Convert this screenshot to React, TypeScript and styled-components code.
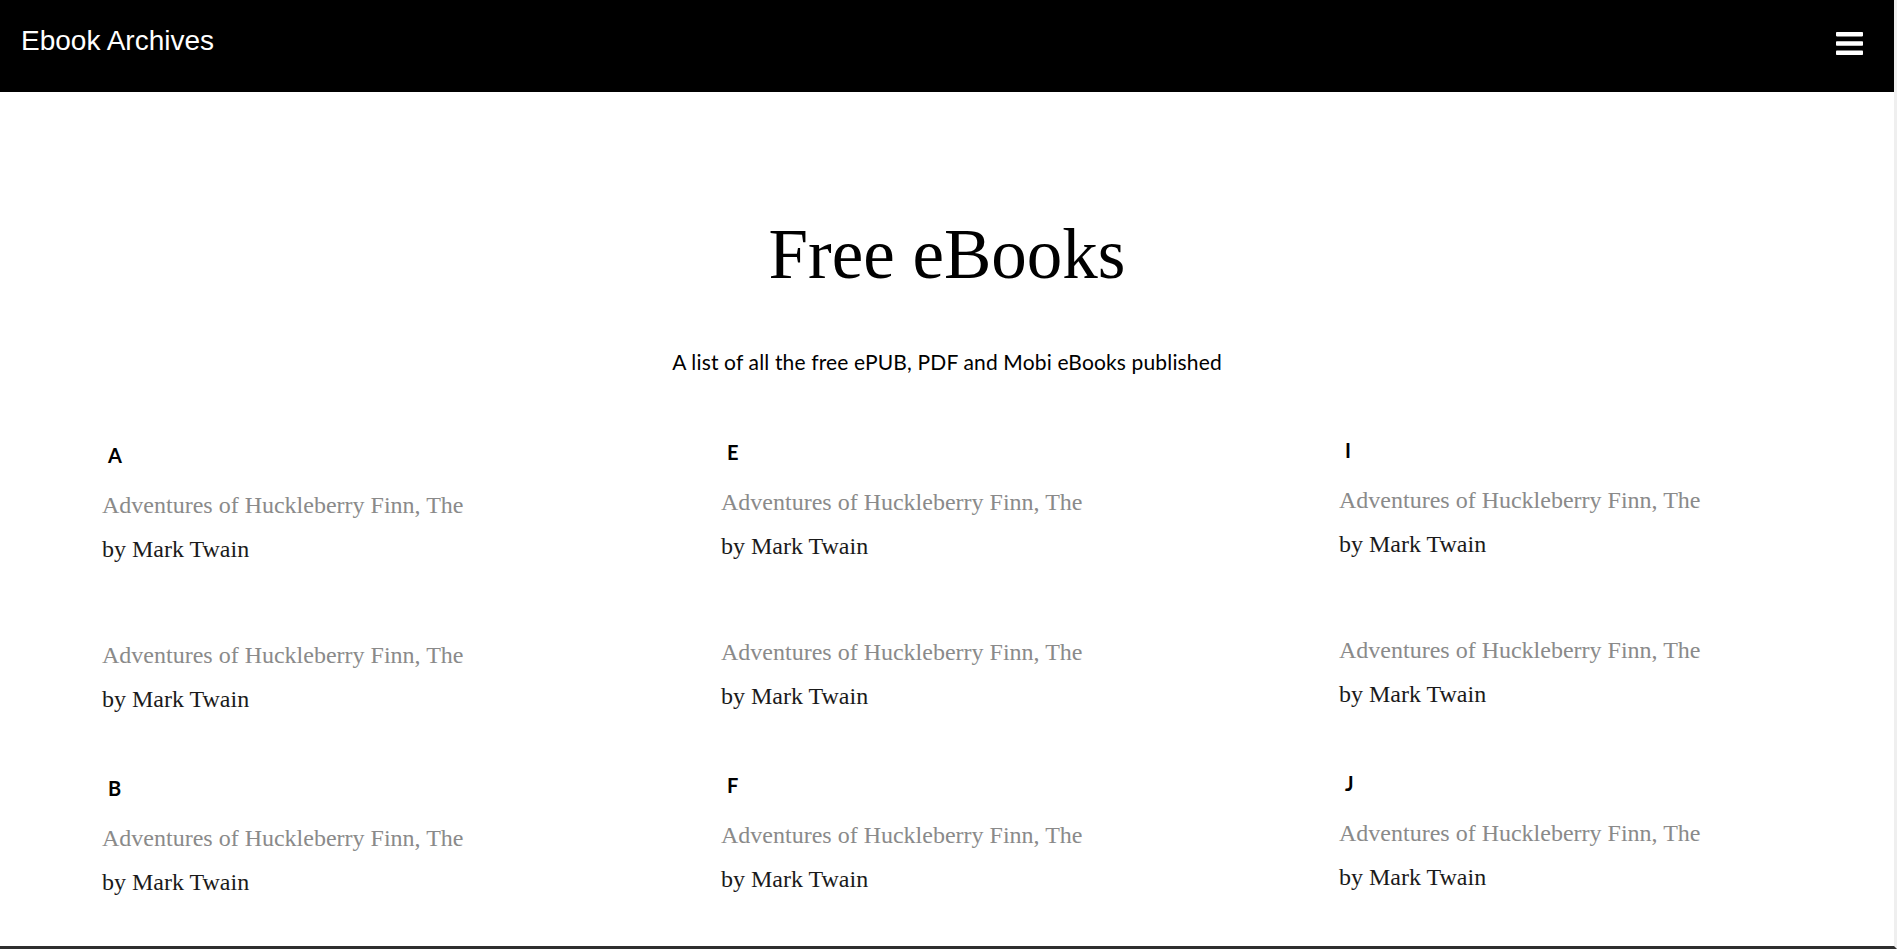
import React from 'react';
import styled, { createGlobalStyle } from 'styled-components';

interface Book {
  title: string;
  author: string;
}

interface LetterGroup {
  letter: string;
  books: Book[];
}

const GlobalStyle = createGlobalStyle`
  * {
    box-sizing: border-box;
  }

  body {
    margin: 0;
    background: #fff;
    color: #000;
  }
`;

const Page = styled.div`
  height: 100vh;
  overflow: hidden;
  border-right: 3px solid #efefef;
  border-bottom: 3px solid #2e2e2e;
`;

const Header = styled.header`
  display: flex;
  justify-content: space-between;
  align-items: flex-start;
  height: 92px;
  padding: 25px 31px 0 21px;
  background: #000;
`;

const Brand = styled.a`
  font-family: 'Liberation Sans', Arial, sans-serif;
  font-size: 28px;
  line-height: 32px;
  color: #fff;
  text-decoration: none;
`;

const MenuButton = styled.button`
  margin-top: 7px;
  padding: 0;
  border: none;
  background: none;
  cursor: pointer;
  display: flex;
`;

const Hero = styled.section`
  display: flex;
  flex-direction: column;
  align-items: center;
  padding-top: 127px;
`;

const Title = styled.h1`
  margin: 0;
  font-family: 'Liberation Serif', 'Times New Roman', serif;
  font-weight: 400;
  font-size: 71px;
  line-height: 70px;
  color: #000;
`;

const Subtitle = styled.p`
  margin: 61px 0 0;
  font-family: Lato, 'Open Sans', sans-serif;
  font-size: 21px;
  letter-spacing: 0.15px;
  line-height: 24px;
  color: #000;
`;

const Columns = styled.div`
  display: grid;
  grid-template-columns: 619px 618px 1fr;
  padding: 69px 0 0 102px;
`;

const Column = styled.div<{ $lift: number }>`
  display: flex;
  flex-direction: column;
  gap: 55px;
  margin-top: ${({ $lift }) => -$lift}px;
`;

const Group = styled.div`
  display: flex;
  flex-direction: column;
`;

const Letter = styled.h4`
  margin: 0 0 16px;
  padding-left: 6px;
  font-family: Lato, 'Open Sans', sans-serif;
  font-weight: 700;
  font-size: 20px;
  line-height: 24px;
  color: #000;
`;

const BookList = styled.ul`
  display: flex;
  flex-direction: column;
  gap: 62px;
  margin: 0;
  padding: 0;
  list-style: none;
`;

const BookItem = styled.li`
  display: flex;
  flex-direction: column;
  font-family: 'Liberation Serif', 'Times New Roman', serif;
  font-size: 24px;
  line-height: 44px;
`;

const BookTitle = styled.a`
  color: #8a8a8a;
  text-decoration: none;
`;

const BookAuthor = styled.span`
  color: #1a1a1a;
`;

const huck: Book = {
  title: 'Adventures of Huckleberry Finn, The',
  author: 'by Mark Twain',
};

const columns: { lift: number; groups: LetterGroup[] }[] = [
  {
    lift: 0,
    groups: [
      { letter: 'A', books: [huck, huck] },
      { letter: 'B', books: [huck] },
    ],
  },
  {
    lift: 3,
    groups: [
      { letter: 'E', books: [huck, huck] },
      { letter: 'F', books: [huck] },
    ],
  },
  {
    lift: 5,
    groups: [
      { letter: 'I', books: [huck, huck] },
      { letter: 'J', books: [huck] },
    ],
  },
];

const BarsIcon = () => (
  <svg width="27" height="23" viewBox="0 0 27 23" fill="#fff">
    <rect x="0" y="0" width="27" height="4.4" rx="0.8" />
    <rect x="0" y="9.3" width="27" height="4.4" rx="0.8" />
    <rect x="0" y="18.6" width="27" height="4.4" rx="0.8" />
  </svg>
);

const App: React.FC = () => {
  return (
    <Page>
      <GlobalStyle />
      <Header>
        <Brand href="#">Ebook Archives</Brand>
        <MenuButton aria-label="Menu">
          <BarsIcon />
        </MenuButton>
      </Header>
      <Hero>
        <Title>Free eBooks</Title>
        <Subtitle>A list of all the free ePUB, PDF and Mobi eBooks published</Subtitle>
      </Hero>
      <Columns>
        {columns.map(({ lift, groups }, i) => (
          <Column key={i} $lift={lift}>
            {groups.map(({ letter, books }) => (
              <Group key={letter}>
                <Letter>{letter}</Letter>
                <BookList>
                  {books.map((book, j) => (
                    <BookItem key={j}>
                      <BookTitle href="#">{book.title}</BookTitle>
                      <BookAuthor>{book.author}</BookAuthor>
                    </BookItem>
                  ))}
                </BookList>
              </Group>
            ))}
          </Column>
        ))}
      </Columns>
    </Page>
  );
};

export default App;
